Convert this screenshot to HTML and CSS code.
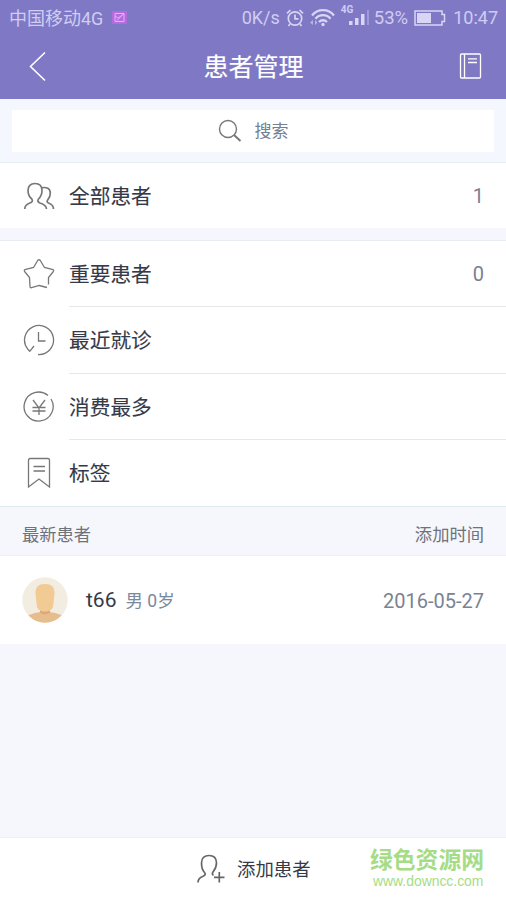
FILE: index.html
```html
<!DOCTYPE html>
<html lang="zh-CN">
<head>
<meta charset="utf-8">
<title>患者管理</title>
<link rel="stylesheet" href="styles.css">
</head>
<body>
<div class="app">
  <header class="top">
    <div class="status">
      <span class="carrier">中国移动4G</span>
      <svg class="note" width="15" height="13" viewBox="0 0 15 13"><rect width="15" height="13" rx="1" fill="#b36bdd"/><path d="M3 2.500h9v8H3zM3 5l3 2 6-4M5 9.500l4-4" fill="none" stroke="#e5b3f4"/></svg>
      <span class="speed">0K/s</span>
      <svg class="alarm" width="18" height="18" viewBox="0 0 18 18" fill="none" stroke="#d8d5f5" stroke-width="1.700"><circle cx="9" cy="9.500" r="6.700"/><path d="M1 4.300 4.500 1M17 4.300 13.500 1M9 5.500v4.300h3.500M4 15l-1.500 2M14 15l1.500 2"/></svg>
      <svg class="wifi" width="27" height="19" viewBox="0 0 27 19" fill="none" stroke="#d8d5f5" stroke-width="2.300"><path d="M3 7.500a14 14 0 0 1 22 0M6.500 10.800a9.500 9.500 0 0 1 15 0M10 14a5.500 5.500 0 0 1 8 0"/><circle cx="14" cy="16.500" r="1.700" fill="#d8d5f5" stroke="none"/><path d="M4 12v5l-3-2.500zM6 12v5l2.500-2.500z" fill="#b9b3e8" stroke="none"/></svg>
      <span class="cell"><span class="cell-type">4G</span><svg width="22" height="17" viewBox="0 0 22 17"><path d="M1 12h3.500v4H1zM7 9h3.500v7H7zM13 5h3.500v11H13z" fill="#d8d5f5"/><path d="M19 1h2v15h-2z" fill="#a19ad9"/></svg></span>
      <span class="percent">53%</span>
      <svg class="battery" width="32" height="16" viewBox="0 0 32 16"><path d="M1 1h27v3.500h2.500v7H28V15H1z" fill="none" stroke="#d8d5f5" stroke-width="1.500"/><path d="M3 3h14v10H3z" fill="#d8d5f5"/></svg>
      <span class="clock">10:47</span>
    </div>
    <nav class="nav">
      <svg class="back" width="20" height="32" viewBox="0 0 20 32"><path d="M17 2.500 2.500 16.500 17 30.500" fill="none" stroke="#fff" stroke-width="1.600"/></svg>
      <h1>患者管理</h1>
      <svg class="book" width="24" height="26" viewBox="0 0 24 26" fill="none" stroke="#fff" stroke-width="1.300"><rect x="1.500" y="1" width="20" height="24" rx="1"/><path d="M5.500 1v24M9 5.800h9M9 9.500h9"/></svg>
    </nav>
  </header>

  <div class="search-bar">
    <div class="search">
      <svg width="24" height="24" viewBox="0 0 24 24" fill="none" stroke="#777"><circle cx="10" cy="10" r="8.500" stroke-width="1.400"/><path d="m16 16 6.500 6" stroke-width="2"/></svg>
      <span>搜索</span>
    </div>
  </div>

  <ul class="list">
    <li class="row all">
      <svg class="icon people" viewBox="0 0 32 32"><path d="M1.800 29c0-3.500 1.500-4.800 5-6 2.500-.8 3.200-2.200 2-4C6.500 17 5 14.500 5 10.500 5 6 7.500 3.500 12 3.500s7 2.500 7 7c0 4-1.500 6.500-3.500 8.500-1.200 1.800-.7 3.200 1.500 4 4 1.200 6.300 2.500 6.500 6"/><path d="M18.500 7.800c5-1 8.800.7 8.800 5.200 0 3-.8 5-2.500 6.800-1.200 1.500-.8 2.700.7 3.200 3.500 1.200 5 2.500 5 6"/></svg>
      <span class="label">全部患者</span><span class="count one">1</span>
    </li>
  </ul>

  <ul class="list group">
    <li class="row">
      <svg class="icon" viewBox="0 0 32 32"><path d="M25.500 26.500 25.500 19.500 30 14c1.200-1.500.8-2.300-.8-2.700L21.500 9.500 17.300 2.500q-1.300-1.800-2.600 0L10.500 9.500 2.800 11.300C1 11.700.8 12.500 2 14l4.500 5.500.5 8.700q0 1.800 1.700 1.500l7.500-2.200 7.800 2"/></svg>
      <span class="label">重要患者</span><span class="count">0</span>
    </li>
    <li class="row">
      <svg class="icon" viewBox="0 0 32 32"><path d="M15 30.500A14.500 14.500 0 1 0 4.800 25.200L6.800 27.300 11 22M15.500 8v9h7"/></svg>
      <span class="label">最近就诊</span>
    </li>
    <li class="row">
      <svg class="icon" viewBox="0 0 32 32"><path d="M25 4.500a14.500 14.500 0 1 0 3 3.500M10 9l6 8 6-8M9.500 16.500h13M9.500 20h13M16 16.500V24"/></svg>
      <span class="label">消费最多</span>
    </li>
    <li class="row">
      <svg class="icon" viewBox="0 0 32 32"><path d="M5.500 30V3.200Q5.500 1.500 7.200 1.500h17.600q1.700 0 1.700 1.700V30L16 22zM10.500 9.500h11.500M10.500 14h11.500"/></svg>
      <span class="label">标签</span>
    </li>
  </ul>

  <div class="section-head"><span>最新患者</span><span>添加时间</span></div>

  <div class="patient">
    <svg class="avatar" width="46" height="46" viewBox="0 0 46 46">
      <defs><clipPath id="face"><circle cx="23" cy="23" r="22.700"/></clipPath></defs>
      <g clip-path="url(#face)"><path d="M0 0h46v46H0z" fill="#f3ece1"/><path d="M4 41c2-4 9-5 14-6h10c5 1 12 2 14 6v5H4z" fill="#e8bd8e"/><path d="M18 28h10v7c-1 3-9 3-10 0z" fill="#dca878"/><path d="M13.500 16c0-6 3-9 9.500-9s9.500 3 9.500 9l-1.200 12c-.5 5-4 6.500-8.300 6.500s-7.800-1.500-8.300-6.500z" fill="#f1ca94"/></g>
    </svg>
    <span class="name">t66</span><span class="meta">男 0岁</span><time>2016-05-27</time>
  </div>

  <footer class="bottom">
    <svg width="30" height="32" viewBox="0 0 30 32" fill="none" stroke="#666" stroke-width="1.700"><path d="M2 29.500c0-3.500 1.500-5 5-6.300 2.500-1 2.800-2.200 1.500-3.700C6.500 17.500 5.500 14.500 5.500 10c0-5 3-7.500 7.500-7.500s7.500 2.500 7.500 7.500c0 4-1.500 6.500-3.500 9-1 1.500-.8 2.700.5 3.300M23.300 19v10.500M18 24.300h10.500"/></svg>
    <span class="add">添加患者</span>
    <div class="mark"><strong>绿色资源网</strong><span>www.downcc.com</span></div>
  </footer>
</div>
</body>
</html>
```
FILE: styles.css
```css
* { box-sizing: border-box; }
body { margin: 0; font-family: Roboto, "Noto Sans CJK SC", sans-serif; color: #363a48; }
svg { display: block; flex: none; }
.app { width: 506px; height: 900px; display: flex; flex-direction: column; background: #f5f7fd; overflow: hidden; }

.top { height: 99px; flex: none; background: #7f79c5; }
.status { display: flex; align-items: center; height: 35px; padding: 0 8px 0 9px; font-size: 18px; line-height: 35px; color: #d0ccf2; white-space: nowrap; }
.carrier { padding-top: 1px; }
.note { margin-left: 9px; }
.speed { margin-left: auto; }
.alarm { margin-left: 6px; }
.wifi { margin-left: 5px; }
.cell { position: relative; width: 29px; height: 20px; margin-left: 5px; padding: 1px 0 0 7px; }
.cell-type { position: absolute; left: 0; top: -4px; font-size: 10px; line-height: 12px; font-weight: 700; }
.percent { margin-left: 4px; padding-top: 1px; font-size: 18.500px; }
.battery { margin-left: 6px; }
.clock { margin-left: 7px; }

.nav { display: flex; align-items: center; justify-content: space-between; height: 62px; padding: 0 23px 0 28px; }
.nav h1 { margin: 0; padding-top: 3px; font-size: 25px; line-height: 59px; font-weight: 400; color: #fff; -webkit-text-stroke: .15px #fff; }

.search-bar { height: 64px; flex: none; padding: 11px 12px; border-bottom: 1px solid #e9edf5; background: #f4f7fd; }
.search { display: flex; align-items: center; justify-content: center; gap: 13px; height: 42px; background: #fff; font-size: 17px; line-height: 24px; color: #728091; }
.search span { padding-bottom: 1px; }

.list { margin: 0; padding: 0; list-style: none; flex: none; background: #fff; }
.row { display: flex; align-items: center; height: 66.250px; padding: 0 22px 0 23px; position: relative; }
.row.all { height: 65px; }
.group { margin-top: 12px; border-top: 1px solid #e8ebf2; border-bottom: 1px solid #e0ebf3; }
.group .row + .row::before { content: ""; position: absolute; left: 69px; right: 0; top: -1px; height: 1px; background: #e6e7eb; }
.icon { width: 32px; height: 32px; fill: none; stroke: #777; stroke-width: 1.300; }
.people { stroke-width: 1.700; }
.label { margin-left: 14px; padding-top: 2px; font-size: 20.700px; line-height: 30px; -webkit-text-stroke: .1px currentColor; }
.count { margin-left: auto; font-size: 20px; color: #7b8090; }

.section-head { display: flex; justify-content: space-between; flex: none; height: 49px; padding: 0 22px; font-size: 17.300px; line-height: 56px; color: #707279; border-bottom: 1px solid #edf0f5; }
.patient { display: flex; align-items: center; flex: none; height: 88px; padding: 0 22px; background: #fff; }
.name { margin-left: 18px; font-size: 21px; }
.meta { margin-left: 9px; padding-bottom: 2px; font-size: 17.500px; color: #7a899b; }
.patient time { margin-left: auto; padding-top: 2px; font-size: 20px; color: #7b8391; }

.bottom { position: relative; display: flex; align-items: center; height: 62px; flex: none; margin-top: auto; padding-left: 196px; background: #fff; box-shadow: 0 -1px #eaf1f7; }
.add { margin-left: 11px; padding-bottom: 2px; font-size: 18.400px; }
.mark { position: absolute; left: 370px; top: 10px; color: #a6dc86; white-space: nowrap; }
.mark strong { display: block; font-size: 22.800px; line-height: 26px; font-weight: 700; }
.mark span { display: block; margin-left: 3px; font: 13.900px/15px "Liberation Sans", sans-serif; }
```
